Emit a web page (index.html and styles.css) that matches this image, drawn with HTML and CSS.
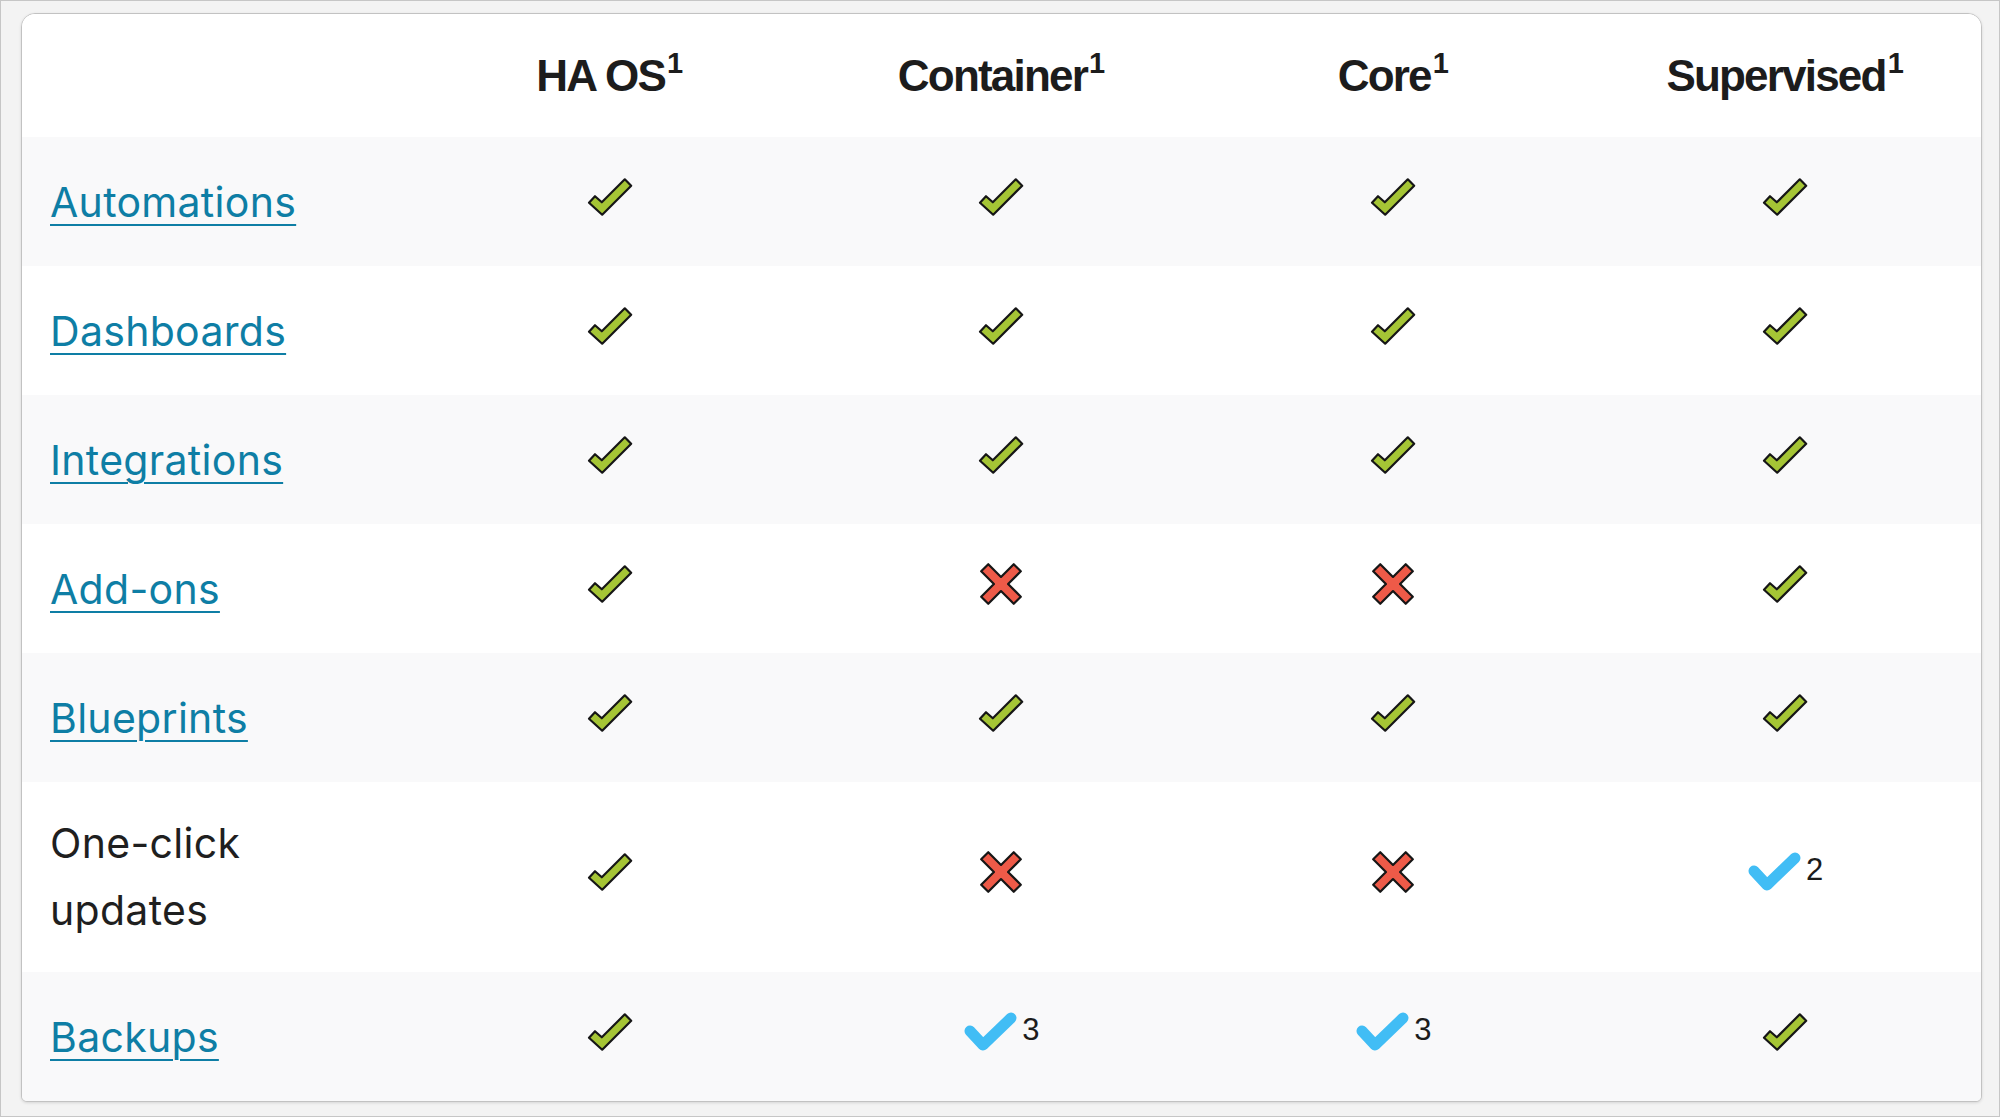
FILE: index.html
```html
<!DOCTYPE html>
<html lang="en">
<head>
<meta charset="utf-8">
<title>Installation comparison</title>
<link rel="stylesheet" href="styles.css">
</head>
<body>
<svg width="0" height="0" class="defs" aria-hidden="true">
  <defs>
    <symbol id="yes" viewBox="0 0 46 40">
      <polygon points="8,19.2 14.8,25.3 37.8,2.3 44.2,8.7 15.2,37.7 2,25.8" fill="#a5c535" stroke="#161616" stroke-width="2.2" stroke-linejoin="round"/>
    </symbol>
    <symbol id="no" viewBox="-21 -21 42 42">
      <path d="M-5,-23 H5 V-5 H23 V5 H5 V23 H-5 V5 H-23 V-5 H-5 Z" transform="rotate(45)" fill="#ee5a48" stroke="#161616" stroke-width="2.2" stroke-linejoin="round"/>
    </symbol>
    <symbol id="partial" viewBox="0 0 54 40">
      <path d="M7 19 L20 33 L48 6" fill="none" stroke="#41bdf5" stroke-width="11" stroke-linecap="round" stroke-linejoin="round"/>
    </symbol>
  </defs>
</svg>
<div class="frame">
  <div class="card">
    <div class="row head">
      <div class="cell"></div>
      <div class="cell th">HA OS<sup>1</sup></div>
      <div class="cell th">Container<sup>1</sup></div>
      <div class="cell th">Core<sup>1</sup></div>
      <div class="cell th">Supervised<sup>1</sup></div>
    </div>

    <div class="row alt">
      <div class="cell label"><a href="#">Automations</a></div>
      <div class="cell"><svg class="ic yes"><use href="#yes"/></svg></div>
      <div class="cell"><svg class="ic yes"><use href="#yes"/></svg></div>
      <div class="cell"><svg class="ic yes"><use href="#yes"/></svg></div>
      <div class="cell"><svg class="ic yes"><use href="#yes"/></svg></div>
    </div>

    <div class="row">
      <div class="cell label"><a href="#">Dashboards</a></div>
      <div class="cell"><svg class="ic yes"><use href="#yes"/></svg></div>
      <div class="cell"><svg class="ic yes"><use href="#yes"/></svg></div>
      <div class="cell"><svg class="ic yes"><use href="#yes"/></svg></div>
      <div class="cell"><svg class="ic yes"><use href="#yes"/></svg></div>
    </div>

    <div class="row alt">
      <div class="cell label"><a href="#">Integrations</a></div>
      <div class="cell"><svg class="ic yes"><use href="#yes"/></svg></div>
      <div class="cell"><svg class="ic yes"><use href="#yes"/></svg></div>
      <div class="cell"><svg class="ic yes"><use href="#yes"/></svg></div>
      <div class="cell"><svg class="ic yes"><use href="#yes"/></svg></div>
    </div>

    <div class="row">
      <div class="cell label"><a href="#">Add-ons</a></div>
      <div class="cell"><svg class="ic yes"><use href="#yes"/></svg></div>
      <div class="cell"><svg class="ic no"><use href="#no"/></svg></div>
      <div class="cell"><svg class="ic no"><use href="#no"/></svg></div>
      <div class="cell"><svg class="ic yes"><use href="#yes"/></svg></div>
    </div>

    <div class="row alt">
      <div class="cell label"><a href="#">Blueprints</a></div>
      <div class="cell"><svg class="ic yes"><use href="#yes"/></svg></div>
      <div class="cell"><svg class="ic yes"><use href="#yes"/></svg></div>
      <div class="cell"><svg class="ic yes"><use href="#yes"/></svg></div>
      <div class="cell"><svg class="ic yes"><use href="#yes"/></svg></div>
    </div>

    <div class="row">
      <div class="cell label plain">One-click updates</div>
      <div class="cell"><svg class="ic yes"><use href="#yes"/></svg></div>
      <div class="cell"><svg class="ic no"><use href="#no"/></svg></div>
      <div class="cell"><svg class="ic no"><use href="#no"/></svg></div>
      <div class="cell"><span class="part"><svg class="ic partial"><use href="#partial"/></svg><span class="note">2</span></span></div>
    </div>

    <div class="row alt">
      <div class="cell label"><a href="#">Backups</a></div>
      <div class="cell"><svg class="ic yes"><use href="#yes"/></svg></div>
      <div class="cell"><span class="part"><svg class="ic partial"><use href="#partial"/></svg><span class="note">3</span></span></div>
      <div class="cell"><span class="part"><svg class="ic partial"><use href="#partial"/></svg><span class="note">3</span></span></div>
      <div class="cell"><svg class="ic yes"><use href="#yes"/></svg></div>
    </div>
  </div>
</div>
</body>
</html>
```

FILE: styles.css
```css
html, body {
  margin: 0;
  padding: 0;
}

body {
  background: #f3f3f3;
  font-family: Inter, "Noto Sans", sans-serif;
}

.defs {
  position: absolute;
  width: 0;
  height: 0;
  overflow: hidden;
}

.frame {
  box-sizing: border-box;
  width: 2000px;
  height: 1117px;
  border: 1px solid #c6c6c6;
  background: #f3f3f3;
  padding: 12px 17px 0 20px;
  overflow: hidden;
}

.card {
  box-sizing: border-box;
  width: 1961px;
  background: #ffffff;
  border: 1px solid #c2c2c2;
  border-radius: 14px 14px 6px 6px;
  box-shadow: 0 1px 3px rgba(0, 0, 0, 0.12);
  overflow: hidden;
}

.row {
  display: grid;
  grid-template-columns: repeat(5, 1fr);
  box-sizing: border-box;
  min-height: 129px;
  padding: 28px 0;
  background: #ffffff;
}

.row.alt {
  background: #f9f9fa;
}

.row.head {
  min-height: 123px;
  padding: 0;
}

.cell {
  display: flex;
  align-items: center;
  justify-content: center;
}

.th {
  font-family: "Liberation Sans", Arial, sans-serif;
  font-weight: 700;
  font-size: 44px;
  letter-spacing: -1.8px;
  color: #1c1c1c;
  line-height: 1;
}

.th sup {
  font-size: 29px;
  letter-spacing: 0;
  vertical-align: 0;
  position: relative;
  top: -12px;
  margin-left: 2px;
}

.label {
  justify-content: flex-start;
  padding: 0 60px 0 28px;
  font-size: 41px;
  letter-spacing: 0.3px;
  line-height: 67px;
  color: #1f1f1f;
}

.label a {
  color: #0e7ea5;
  text-decoration: underline;
  text-decoration-thickness: 2px;
  text-underline-offset: 7px;
  position: relative;
  top: 1px;
}

.ic {
  display: block;
}

.ic.yes {
  width: 46px;
  height: 40px;
  margin-bottom: 10px;
}

.ic.no {
  width: 42px;
  height: 42px;
  margin-bottom: 10px;
}

.part {
  display: flex;
  align-items: flex-start;
  margin-bottom: 10px;
}

.ic.partial {
  width: 54px;
  height: 40px;
}

.note {
  font-family: "Liberation Sans", Arial, sans-serif;
  font-size: 31px;
  line-height: 1;
  color: #1c1c1c;
  margin-left: 5px;
  margin-top: 2px;
}
```
